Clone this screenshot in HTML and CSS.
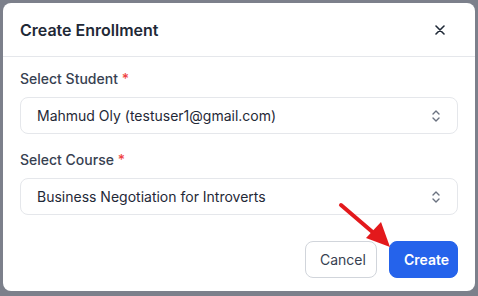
FILE: index.html
```html
<!DOCTYPE html>
<html>
<head>
<meta charset="utf-8">
<link rel="stylesheet" href="styles.css">
</head>
<body>
<div class="modal">
  <div class="header">
    <h2 class="title">Create Enrollment</h2>
    <svg class="close" width="10" height="10" viewBox="0 0 10 10"><path d="M1 1L9 9M9 1L1 9" stroke="#1f2937" stroke-width="1.6" stroke-linecap="round"/></svg>
  </div>
  <div class="body">
    <div class="field">
      <div class="label">Select Student <span class="req">*</span></div>
      <div class="select"><span>Mahmud Oly (testuser1@gmail.com)</span>
        <svg width="10" height="14" viewBox="0 0 10 14"><path d="M2 5L5 2L8 5M2 9L5 12L8 9" fill="none" stroke="#6b7280" stroke-width="1.4" stroke-linecap="round" stroke-linejoin="round"/></svg>
      </div>
    </div>
    <div class="field">
      <div class="label">Select Course <span class="req">*</span></div>
      <div class="select"><span>Business Negotiation for Introverts</span>
        <svg width="10" height="14" viewBox="0 0 10 14"><path d="M2 5L5 2L8 5M2 9L5 12L8 9" fill="none" stroke="#6b7280" stroke-width="1.4" stroke-linecap="round" stroke-linejoin="round"/></svg>
      </div>
    </div>
  </div>
  <div class="footer">
    <button class="btn cancel">Cancel</button>
    <button class="btn create">Create</button>
  </div>
</div>
<svg class="arrow" width="478" height="296" viewBox="0 0 478 296">
  <line x1="341" y1="205" x2="376" y2="235" stroke="#e3191c" stroke-width="4" stroke-linecap="round"/>
  <polygon points="390,247 366,238 381,222" fill="#e3191c"/>
</svg>
</body>
</html>
```
FILE: styles.css
```css
html, body { margin: 0; padding: 0; }
body {
  width: 478px; height: 296px;
  background: #7c808b;
  font-family: Inter, "Noto Sans", sans-serif;
  padding: 3px;
  box-sizing: border-box;
  position: relative;
  overflow: hidden;
}
.modal {
  position: relative;
  width: 472px; height: 288px;
  background: #fff;
  border-radius: 8px;
  box-sizing: border-box;
  display: flex; flex-direction: column;
}
.header {
  height: 54px;
  border-bottom: 1px solid #e5e7eb;
  display: flex; align-items: center; justify-content: space-between;
  padding: 0 30px 0 17px;
  box-sizing: border-box;
}
.title { margin: 0; font-size: 16px; font-weight: 600; color: #1f2937; }
.body { padding: 12px 17px 0; display: flex; flex-direction: column; gap: 16px; }
.field { display: flex; flex-direction: column; gap: 8px; }
.label { font-size: 14px; font-weight: 500; line-height: 20px; color: #374151; }
.req { color: #ef4444; }
.select {
  height: 37px; box-sizing: border-box;
  border: 1px solid #e5e7eb; border-radius: 8px;
  display: flex; align-items: center; justify-content: space-between;
  padding: 0 16px;
  font-size: 14px; color: #1f2937;
}
.footer {
  margin-top: auto;
  padding: 0 17px 13px;
  display: flex; justify-content: flex-end; gap: 12px;
}
.btn {
  font-family: Inter, "Noto Sans", sans-serif;
  font-size: 14px; height: 37px; border-radius: 8px; padding: 0 14px;
  box-sizing: border-box;
}
.cancel { background: #fff; border: 1px solid #d1d5db; color: #374151; width: 72px; }
.create { background: #2563eb; border: 1px solid #2563eb; color: #fff; font-weight: 600; width: 69px; }
.arrow { position: absolute; left: 0; top: 0; pointer-events: none; }
```
